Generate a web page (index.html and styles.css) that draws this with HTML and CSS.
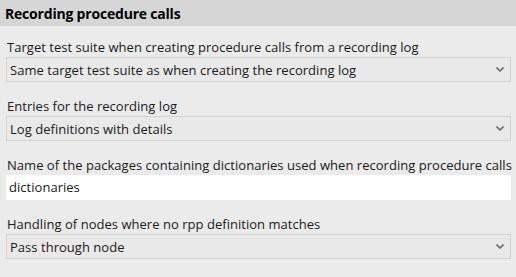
FILE: index.html
```html
<!DOCTYPE html>
<html lang="en">
<head>
    <meta charset="UTF-8">
    <title>Recording procedure calls</title>
    <link rel="stylesheet" href="styles.css">
</head>
<body>
    <div class="panel">
        <div class="panel-header">Recording procedure calls</div>
        <div class="panel-body">
            <div class="field">
                <label class="field-label">Target test suite when creating procedure calls from a recording log</label>
                <div class="combo">
                    <span class="combo-text">Same target test suite as when creating the recording log</span>
                    <svg class="chevron" width="8" height="5" viewBox="0 0 8 5"><path d="M0.5 0.5 L4 4 L7.5 0.5" fill="none" stroke="#6b6b6b" stroke-width="1.6"/></svg>
                </div>
            </div>
            <div class="field">
                <label class="field-label">Entries for the recording log</label>
                <div class="combo">
                    <span class="combo-text">Log definitions with details</span>
                    <svg class="chevron" width="8" height="5" viewBox="0 0 8 5"><path d="M0.5 0.5 L4 4 L7.5 0.5" fill="none" stroke="#6b6b6b" stroke-width="1.6"/></svg>
                </div>
            </div>
            <div class="field">
                <label class="field-label">Name of the packages containing dictionaries used when recording procedure calls</label>
                <div class="text-input">dictionaries</div>
            </div>
            <div class="field">
                <label class="field-label">Handling of nodes where no rpp definition matches</label>
                <div class="combo">
                    <span class="combo-text">Pass through node</span>
                    <svg class="chevron" width="8" height="5" viewBox="0 0 8 5"><path d="M0.5 0.5 L4 4 L7.5 0.5" fill="none" stroke="#6b6b6b" stroke-width="1.6"/></svg>
                </div>
            </div>
        </div>
    </div>
</body>
</html>
```
FILE: styles.css
```css
* {
    box-sizing: border-box;
    margin: 0;
    padding: 0;
}

body {
    font-family: 'Open Sans', 'Noto Sans', sans-serif;
    font-size: 13px;
    letter-spacing: 0.03px;
    color: #1a1a1a;
    background: #ebebeb;
    width: 516px;
    height: 277px;
    overflow: hidden;
}

.panel-header {
    height: 26px;
    line-height: 27px;
    padding-left: 5px;
    background: #d6d6d6;
    font-weight: 700;
    font-size: 14px;
    letter-spacing: -0.2px;
    color: #000;
}

.panel-body {
    display: flex;
    flex-direction: column;
    gap: 15px;
    padding: 12px 5px 0 6px;
}

.field {
    display: flex;
    flex-direction: column;
}

.field-label {
    height: 19px;
    line-height: 19px;
    padding-left: 1px;
    white-space: nowrap;
}

.combo {
    height: 25px;
    display: flex;
    align-items: center;
    justify-content: space-between;
    padding: 0 6px 0 3px;
    background: #e9e9e9;
    border: 1px solid #d3d3d3;
}

.combo-text,
.text-input {
    white-space: nowrap;
}

.text-input {
    height: 25px;
    line-height: 25px;
    padding-left: 3px;
    background: #ffffff;
}

.chevron {
    display: block;
}
```
